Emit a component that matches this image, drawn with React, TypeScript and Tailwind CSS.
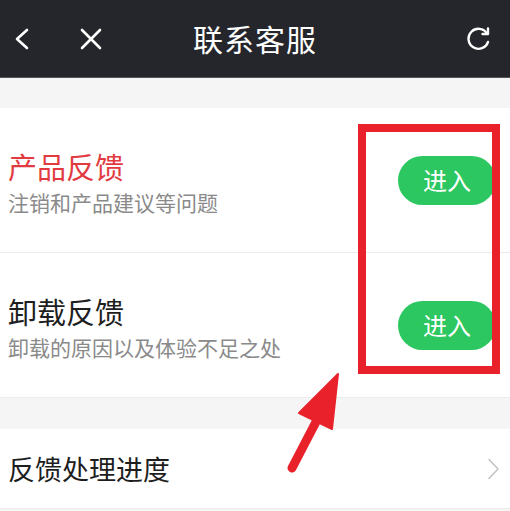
const font = { fontFamily: '"Noto Sans CJK SC", "Noto Sans", sans-serif' };

function Row({ title, desc, red }: { title: string; desc: string; red?: boolean }) {
  return (
    <div className="flex h-[145px] items-center justify-between border-b border-[#ececec] pl-2 pr-[14px]">
      <div className="mt-[4px] flex flex-col">
        <span className={"text-[29px] leading-[40px] " + (red ? "text-[#e23b3f]" : "text-[#1e1e1e]")}>{title}</span>
        <span className="text-[21px] leading-[32px] text-[#8a8a8a]">{desc}</span>
      </div>
      <button className="flex h-[49px] w-[98px] items-center justify-center rounded-full bg-[#2cc760] text-[24px] text-white">
        进入
      </button>
    </div>
  );
}

export default function App() {
  return (
    <div className="relative h-[511px] w-[510px] overflow-hidden bg-[#f5f5f5]" style={font}>
      <header className="flex h-[78px] items-center border-b border-[#55565b] bg-[#25262b] text-white">
        <div className="flex w-[120px] items-center gap-[50px] pl-[14px]">
          <svg width="16" height="22" viewBox="0 0 16 22" fill="none" stroke="white" strokeWidth="2.6" strokeLinecap="round" strokeLinejoin="round">
            <path d="M13 2 L3 11 L13 20" />
          </svg>
          <svg width="22" height="22" viewBox="0 0 22 22" fill="none" stroke="white" strokeWidth="2.6" strokeLinecap="round">
            <path d="M2 2 L20 20 M20 2 L2 20" />
          </svg>
        </div>
        <h1 className="flex-1 text-center text-[30px] tracking-[1px]">联系客服</h1>
        <div className="flex w-[120px] justify-end pr-[18px]">
          <svg width="26" height="24" viewBox="0 0 26 24" fill="none" stroke="white" strokeWidth="2.4" strokeLinecap="round" strokeLinejoin="round">
            <path d="M21 6.5 A10 10 0 1 0 22 15" />
            <path d="M22 1.5 L22 7 L16.5 7" />
          </svg>
        </div>
      </header>

      <div className="mt-[30px] bg-white">
        <Row title="产品反馈" desc="注销和产品建议等问题" red />
        <Row title="卸载反馈" desc="卸载的原因以及体验不足之处" />
      </div>

      <div className="mt-[31px] flex h-[80px] items-center justify-between border-b border-[#ececec] bg-white pl-2 pr-[10px]">
        <span className="mt-[2px] text-[27px] text-[#1e1e1e]">反馈处理进度</span>
        <svg width="13" height="22" viewBox="0 0 13 22" fill="none" stroke="#c4c4c4" strokeWidth="1.6" strokeLinecap="round" strokeLinejoin="round">
          <path d="M2 1.5 L11 11 L2 20.5" />
        </svg>
      </div>

      <div className="pointer-events-none absolute left-[358px] top-[124px] h-[250px] w-[142px] border-[8px] border-[#e8212b]" />

      <svg className="pointer-events-none absolute left-0 top-0" width="510" height="511" viewBox="0 0 510 511">
        <path d="M292 468 L318 418" stroke="#e8212b" strokeWidth="9" strokeLinecap="round" />
        <path d="M338 374 L299 413 L332 429 Z" fill="#e8212b" stroke="#e8212b" strokeWidth="2" strokeLinejoin="round" />
      </svg>
    </div>
  );
}
